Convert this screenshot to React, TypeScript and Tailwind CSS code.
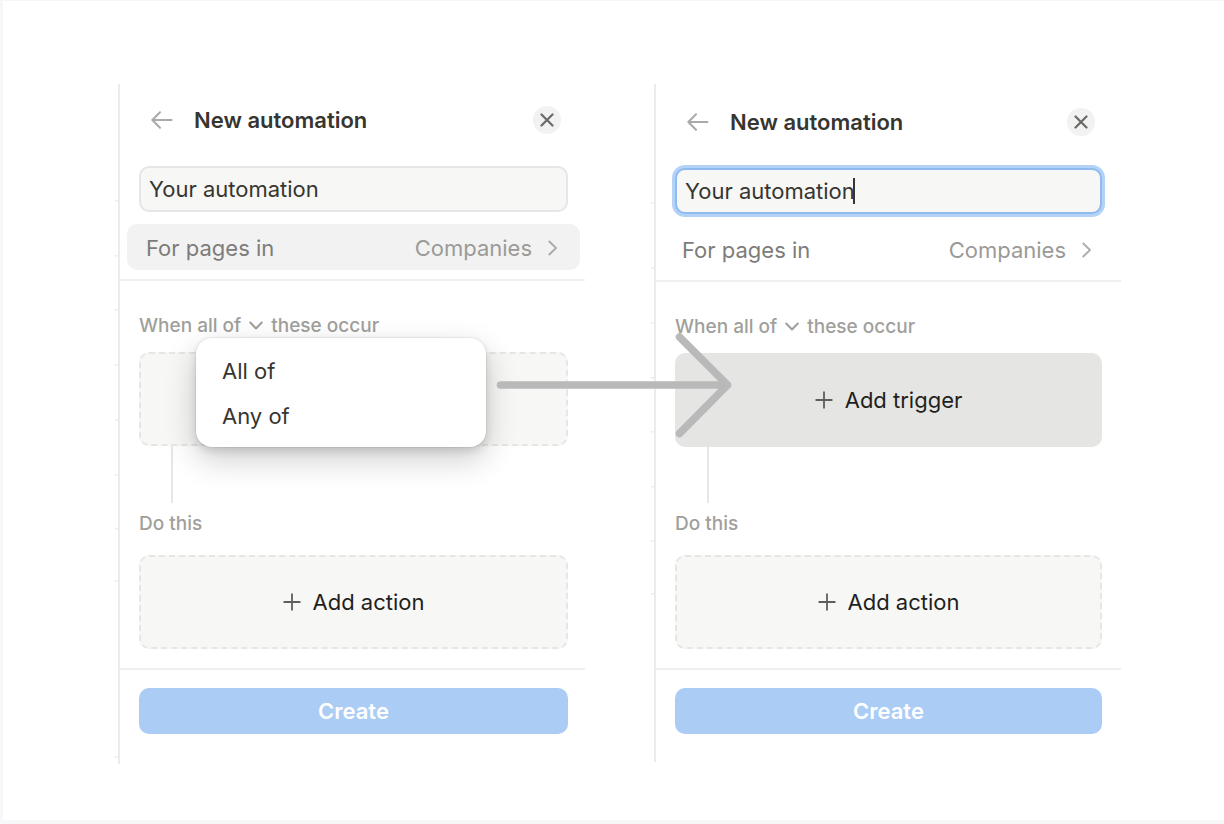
import { useState } from "react";
import clsx from "clsx";

const stroke = {
  fill: "none",
  stroke: "currentColor",
  strokeLinecap: "round" as const,
  strokeLinejoin: "round" as const,
};

function BackIcon() {
  return (
    <svg width="22" height="20" viewBox="0 0 22 20" strokeWidth="2" {...stroke} aria-hidden="true">
      <path d="M20.500 10H1.500M9 2.200L1.300 10 9 17.800" />
    </svg>
  );
}

function CloseIcon() {
  return (
    <svg width="14" height="14" viewBox="0 0 14 14" strokeWidth="2.2" {...stroke} aria-hidden="true">
      <path d="M1.500 1.500l11 11M12.500 1.500l-11 11" />
    </svg>
  );
}

function ChevronRightIcon() {
  return (
    <svg width="10" height="16" viewBox="0 0 10 16" strokeWidth="1.8" {...stroke} aria-hidden="true">
      <path d="M1.300 1.500L8 8l-6.700 6.500" />
    </svg>
  );
}

function ChevronDownIcon() {
  return (
    <svg width="14" height="10" viewBox="0 0 14 10" strokeWidth="2" {...stroke} aria-hidden="true">
      <path d="M1.200 1.500L7 7.500l5.800-6" />
    </svg>
  );
}

function PlusIcon() {
  return (
    <svg width="18" height="18" viewBox="0 0 18 18" strokeWidth="1.8" {...stroke} aria-hidden="true">
      <path d="M9 1.200v15.600M1.200 9h15.600" />
    </svg>
  );
}

// Row edges of the table that sits behind the panel
function RowEdges({ rows }: { rows: number[] }) {
  return (
    <svg className="absolute top-0 -left-[5px] w-1 h-full text-[#ececec]" aria-hidden="true">
      {rows.map((y) => (
        <rect key={y} x="0" y={y - 1} width="4" height="1.500" fill="currentColor" />
      ))}
    </svg>
  );
}

function ScopeMenu() {
  return (
    <div
      role="menu"
      className="absolute left-[57px] right-[82px] -top-3.5 z-10 pt-[11px] pb-2 flex flex-col rounded-2xl bg-white shadow-[0_0_0_1px_rgba(0,0,0,0.05),0_4px_8px_rgba(0,0,0,0.12),0_12px_32px_rgba(0,0,0,0.2)]"
    >
      <button role="menuitem" className="h-[45px] px-[26px] text-left text-[22px] text-[#37352f]">
        All of
      </button>
      <button role="menuitem" className="h-[45px] px-[26px] text-left text-[22px] text-[#37352f]">
        Any of
      </button>
    </div>
  );
}

interface AutomationPanelProps {
  id: string;
  rows: number[];
  menuOpen?: boolean;
  editing?: boolean;
}

function AutomationPanel({ id, rows, menuOpen, editing }: AutomationPanelProps) {
  const [name, setName] = useState("Your automation");
  const gutter = editing ? "pl-[19px] pr-[19px]" : "pl-[19px] pr-[17px]";

  return (
    <section
      className={clsx(
        "relative self-start border-l-2 border-[#ececec]",
        editing ? "pt-6 pb-7" : "pt-[22px] pb-[30px]"
      )}
    >
      <RowEdges rows={rows} />

      <header className={clsx("flex items-center pl-[31px] h-7", editing ? "pr-[26px]" : "pr-6")}>
        <button aria-label="Back" className="text-[#a9a9a7]">
          <BackIcon />
        </button>
        <h2 className="ml-[21px] text-[22px] leading-7 font-semibold text-[#37352f]">New automation</h2>
        <button
          aria-label="Close"
          className="ml-auto size-7 flex items-center justify-center rounded-full bg-[#f2f2f2] text-[#6b6a67]"
        >
          <CloseIcon />
        </button>
      </header>

      <div className={clsx("mt-8", gutter)}>
        <div className="relative">
          <input
            id={id}
            aria-label="Automation name"
            value={name}
            onChange={(e) => setName(e.target.value)}
            className={clsx(
              "block w-full h-[46px] px-2 rounded-[10px] border-2 bg-[#f7f7f5] text-[22px] text-[#37352f] outline-none",
              editing ? "border-[#8fbbee] ring-3 ring-[#b3d2f7]" : "border-[#e6e6e4]"
            )}
          />
          {editing && <span className="absolute left-[178px] top-2.5 w-0.5 h-[26px] bg-[#37352f]" />}
        </div>
      </div>

      <button
        className={clsx(
          "mt-3 ml-[7px] pt-0.5 pl-[19px] h-[46px] w-[calc(100%-12px)] flex items-center rounded-[10px] text-[22px]",
          editing ? "pr-6" : "pr-[22px] bg-[#f2f2f2]"
        )}
      >
        <span className="text-[#7d7c7a]">For pages in</span>
        <span className="ml-auto text-[#9b9a97]">Companies</span>
        <span className="ml-4 text-[#acaba9]">
          <ChevronRightIcon />
        </span>
      </button>

      <div className={clsx("border-t-2 border-[#f0f0f0]", editing ? "mt-2" : "mt-[9px]")} />

      <div className={clsx("pt-[33px] pb-[19px]", gutter)}>
        <div className="flex items-center h-6 text-[19px] leading-6 font-medium text-[#a09f9c]">
          <span>When&nbsp;</span>
          <button aria-expanded={!!menuOpen} className="flex items-center gap-2">
            all of
            <ChevronDownIcon />
          </button>
          <span className="ml-2">these occur</span>
        </div>

        <div className="relative mt-3.5">
          {editing ? (
            <button className="w-full h-[94px] flex items-center justify-center gap-3 rounded-[10px] bg-[#e5e5e3] text-[22px] text-[#1f1f1e]">
              <span className="text-[#5f5e5b]">
                <PlusIcon />
              </span>
              Add trigger
            </button>
          ) : (
            <button
              aria-label="Add trigger"
              className="block w-full h-[94px] rounded-[10px] border-2 border-dashed border-[#e6e6e4] bg-[#f7f7f5]"
            />
          )}
          {menuOpen && <ScopeMenu />}
        </div>

        <div className={clsx("ml-8 w-0.5 bg-[#e6e6e5]", editing ? "h-14" : "h-[57px]")} />

        <h3 className="mt-[9px] text-[19px] leading-6 font-medium text-[#a09f9c]">Do this</h3>
        <button className="mt-[19px] w-full h-[94px] flex items-center justify-center gap-3 rounded-[10px] border-2 border-dashed border-[#e6e6e4] bg-[#f7f7f5] text-[22px] text-[#1f1f1e]">
          <span className="text-[#5f5e5b]">
            <PlusIcon />
          </span>
          Add action
        </button>
      </div>

      <footer className={clsx("pt-[18px] border-t-2 border-[#f0f0f0]", gutter)}>
        <button className="w-full h-[46px] pt-px rounded-[10px] bg-[#abcdf5] text-[22px] font-semibold text-white">
          Create
        </button>
      </footer>
    </section>
  );
}

export default function App() {
  return (
    <main className="min-h-screen border-t border-l-3 border-b-4 border-[#f7f7f9] bg-white font-['Inter',sans-serif]">
      <div className="relative mt-[83px] ml-[115px] mr-[103px] grid grid-cols-2 gap-[69px]">
        <AutomationPanel
          id="automation-name-before"
          rows={[117, 172, 226, 281, 336, 391, 445, 497, 673]}
          menuOpen
        />
        <AutomationPanel
          id="automation-name-after"
          rows={[119, 184, 239, 294, 348, 403, 457, 510]}
          editing
        />
        <svg
          className="absolute top-[248px] left-[377px] z-20 pointer-events-none text-[#b9b9b9]"
          width="240"
          height="108"
          viewBox="0 0 240 108"
          strokeWidth="7.500"
          {...stroke}
          aria-hidden="true"
        >
          <path d="M5.500 53H232.500M184.500 5l48 48-48 48.500" />
        </svg>
      </div>
    </main>
  );
}
